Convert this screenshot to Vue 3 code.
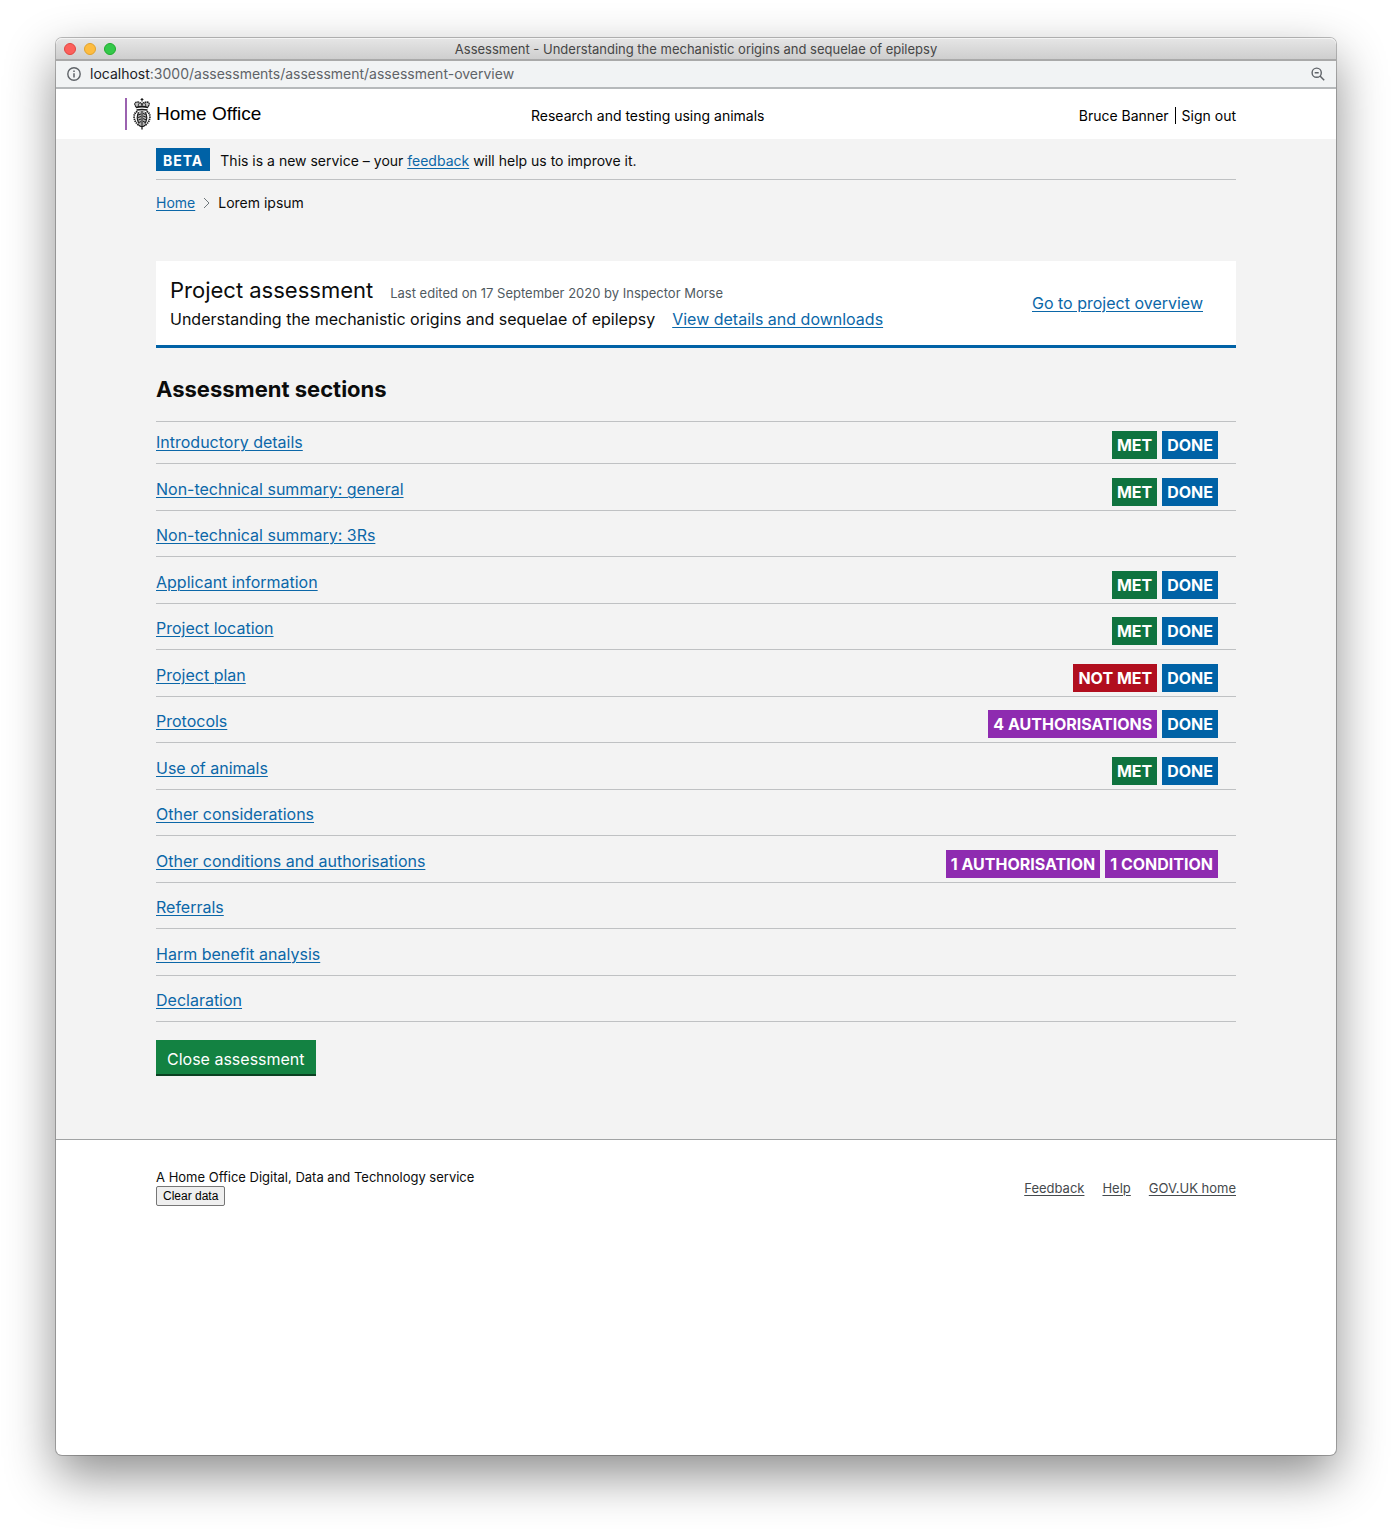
<script setup>
const title = 'Assessment - Understanding the mechanistic origins and sequelae of epilepsy'

const met = { text: 'Met', tone: 'green' }
const done = { text: 'Done', tone: 'blue' }

const sections = [
  { name: 'Introductory details', tags: [met, done] },
  { name: 'Non-technical summary: general', tags: [met, done] },
  { name: 'Non-technical summary: 3Rs', tags: [] },
  { name: 'Applicant information', tags: [met, done] },
  { name: 'Project location', tags: [met, done] },
  { name: 'Project plan', tags: [{ text: 'Not met', tone: 'red' }, done] },
  { name: 'Protocols', tags: [{ text: '4 authorisations', tone: 'purple' }, done] },
  { name: 'Use of animals', tags: [met, done] },
  { name: 'Other considerations', tags: [] },
  {
    name: 'Other conditions and authorisations',
    tags: [{ text: '1 authorisation', tone: 'purple' }, { text: '1 condition', tone: 'purple' }]
  },
  { name: 'Referrals', tags: [] },
  { name: 'Harm benefit analysis', tags: [] },
  { name: 'Declaration', tags: [] }
]

const footerLinks = ['Feedback', 'Help', 'GOV.UK home']
</script>

<template>
  <div class="window">
    <div class="titlebar">
      <div class="lights">
        <span class="light close"></span>
        <span class="light minimise"></span>
        <span class="light expand"></span>
      </div>
      <div class="title">{{ title }}</div>
    </div>

    <div class="address">
      <svg class="info" viewBox="0 0 14 14" width="14" height="14" aria-hidden="true">
        <circle cx="7" cy="7" r="6.2" fill="none" stroke="#5f6368" stroke-width="1.4" />
        <path d="M7 6.2v4.2M7 3.6v1.5" stroke="#5f6368" stroke-width="1.5" />
      </svg>
      <div class="url"><span>localhost</span>:3000/assessments/assessment/assessment-overview</div>
      <svg viewBox="0 0 14 14" width="14" height="14" aria-hidden="true">
        <circle cx="5.7" cy="5.7" r="4.6" fill="none" stroke="#5f6368" stroke-width="1.4" />
        <path d="M3.7 5.7h4M9 9l4.2 4.2" fill="none" stroke="#5f6368" stroke-width="1.5" />
      </svg>
    </div>

    <header class="header">
      <div class="container header-row">
        <a class="brand" href="#">
          <svg class="crest" viewBox="0 0 18 32" width="18" height="32" aria-hidden="true">
            <ellipse cx="9" cy="20" rx="5.4" ry="7.4" fill="#b5b5b5" />
            <path d="M3.400 9 2 5.500 4.500 4 9 6l4.500-2L16 5.500 14.600 9z" fill="#c4c4c4" />
            <g fill="none" stroke="#1a1a1a">
              <path d="M9 0v3.400M7.600 1.500h2.800" stroke-width="1.100" />
              <path d="M3 8.800C.8 6 1.800 4 4.400 4c2 0 3.600.8 4.600 2.200C10 4.800 11.600 4 13.600 4c2.600 0 3.600 2 1.400 4.800" stroke-width="1.300" stroke-dasharray="1.700 .5" />
              <path d="M5.600 8.800C5 7 5.400 6 6.600 5M12.400 8.800c.6-1.800.2-2.800-1-3.800M9 5v4" stroke-width="1" />
              <path d="M2.800 9.400c4-1 8.400-1 12.400 0M3.600 12c3.600-.8 7.200-.8 10.800 0" stroke-width="1.500" />
              <path d="M4.400 13.400C1.600 14.800.8 17.200 1.200 20c.4 3 2 5.200 4.400 7M13.600 13.400c2.800 1.400 3.600 3.800 3.200 6.600-.4 3-2 5.200-4.400 7" stroke-width="1.800" stroke-dasharray="1.400 .7" />
              <path d="M5.600 14.200c-1.800 3.600-1.800 7.800.6 11.200M12.400 14.200c1.800 3.600 1.800 7.800-.6 11.200" stroke-width="1.100" />
              <path d="M9 13v16M5 17l3-1M5 19.500l3-1M5.400 22l2.600-1M6.200 24.400 8 23.600M10 15.400l2.600 1.200M10 18l3 1.200M10 20.600l3 1.200M10 23.200l2 1" stroke-width="1" />
              <path d="M5.600 27c1.200 1 2.200 1.400 3.400 1.600 1.200-.2 2.200-.6 3.400-1.600M9 28v3.500" stroke-width="1.300" />
            </g>
          </svg>
          <span>Home Office</span>
        </a>
        <div class="service">Research and testing using animals</div>
        <div class="account">
          <span>Bruce Banner</span>
          <a href="#">Sign out</a>
        </div>
      </div>
    </header>

    <main class="main">
      <div class="container">
        <div class="phase">
          <strong class="beta">BETA</strong>
          <span>This is a new service – your <a href="#">feedback</a> will help us to improve it.</span>
        </div>

        <nav class="crumbs" aria-label="Breadcrumb">
          <a href="#">Home</a>
          <svg viewBox="0 0 7 12" width="7" height="12" aria-hidden="true">
            <path d="M1 1l5 5-5 5" fill="none" stroke="#6f777b" />
          </svg>
          <span>Lorem ipsum</span>
        </nav>

        <section class="project">
          <div>
            <div class="line">
              <h1>Project assessment</h1>
              <span class="edited">Last edited on 17 September 2020 by Inspector Morse</span>
            </div>
            <div class="line subtitle">
              <span>Understanding the mechanistic origins and sequelae of epilepsy</span>
              <a href="#">View details and downloads</a>
            </div>
          </div>
          <a href="#">Go to project overview</a>
        </section>

        <h2>Assessment sections</h2>
        <ul class="sections">
          <li v-for="section in sections" :key="section.name">
            <a href="#">{{ section.name }}</a>
            <div class="tags">
              <strong v-for="tag in section.tags" :key="tag.text" class="tag" :class="tag.tone">{{ tag.text }}</strong>
            </div>
          </li>
        </ul>

        <button class="submit" type="button">Close assessment</button>
      </div>
    </main>

    <footer class="footer">
      <div class="container footer-row">
        <div>
          <p>A Home Office Digital, Data and Technology service</p>
          <button class="clear" type="button">Clear data</button>
        </div>
        <nav class="footer-links" aria-label="Footer">
          <a v-for="link in footerLinks" :key="link" href="#">{{ link }}</a>
        </nav>
      </div>
    </footer>
  </div>
</template>

<style>
body {
  margin: 0;
  background: #fff;
}
</style>

<style scoped>
* {
  box-sizing: border-box;
}

.window {
  display: flex;
  flex-direction: column;
  min-height: calc(100vh - 112px);
  margin: 38px 56px 74px;
  border-radius: 6px;
  background: #fff;
  box-shadow: 0 0 0 1px rgba(0, 0, 0, 0.25), 0 20px 50px rgba(0, 0, 0, 0.45);
  color: #0b0c0c;
  font-family: Inter, "Liberation Sans", sans-serif;
  font-size: 16px;
  line-height: 24px;
}

.titlebar {
  display: flex;
  align-items: center;
  height: 23px;
  padding: 0 8px;
  border-bottom: 2px solid #a9a9a9;
  border-radius: 6px 6px 0 0;
  background: linear-gradient(#e6e6e6, #cecece);
  box-shadow: inset 0 1px #f4f4f4;
}

.lights {
  display: flex;
  flex: 1;
  gap: 8px;
}

.titlebar::after {
  content: "";
  flex: 1;
}

.light {
  width: 12px;
  height: 12px;
  border: 1px solid #e2463f;
  border-radius: 50%;
  background: #fc605c;
}

.minimise {
  border-color: #e1a32c;
  background: #fdbc40;
}

.expand {
  border-color: #1eac2c;
  background: #34c84a;
}

.title {
  color: #464646;
  font-size: 13px;
}

.address {
  display: flex;
  align-items: center;
  height: 28px;
  padding: 0 11px;
  border-bottom: 2px solid #b6b9bb;
  background: #f1f3f4;
  color: #5f6368;
  font-size: 14px;
}

.url {
  flex: 1;
  margin-left: 9px;
}

.url span {
  color: #202124;
}

.container {
  max-width: 1080px;
  margin: 0 auto;
}

.header-row {
  display: grid;
  grid-template-columns: 375px auto 1fr;
  align-items: center;
  height: 50px;
  color: #000;
  font-size: 14px;
}

.brand {
  display: flex;
  align-items: center;
  justify-self: start;
  gap: 5px;
  height: 32px;
  margin-left: -31px;
  padding-left: 6px;
  border-left: 2px solid #9b62b0;
  color: #000;
  font-family: "Liberation Sans", Arial, sans-serif;
  font-size: 19px;
  text-decoration: none;
}

.service,
.account {
  padding-top: 2px;
  line-height: 17px;
}

.account {
  display: flex;
  justify-content: flex-end;
}

.account a {
  margin-left: 6px;
  padding-left: 6px;
  border-left: 1px solid #000;
  color: #000;
  text-decoration: none;
}

.main {
  padding-bottom: 63px;
  border-bottom: 1px solid #a1a3a4;
  background: #f3f3f3;
}

.main a {
  color: #0b67a8;
  text-decoration-thickness: 1px;
  text-underline-offset: 2px;
}

.phase {
  display: flex;
  align-items: baseline;
  gap: 10px;
  padding: 9px 0 8px;
  border-bottom: 1px solid #bfc1c3;
  font-size: 14px;
  line-height: 21px;
}

.beta {
  padding: 2px 7px 0;
  background: #0062a6;
  color: #fff;
  font-weight: 700;
  letter-spacing: 1px;
}

.crumbs {
  display: flex;
  align-items: center;
  gap: 8px;
  margin-top: 11px;
  font-size: 14px;
}

.project {
  display: flex;
  align-items: center;
  justify-content: space-between;
  margin-top: 46px;
  padding: 13px 33px 14px 14px;
  border-bottom: 3px solid #0062a6;
  background: #fff;
}

.line {
  display: flex;
  align-items: baseline;
  gap: 17px;
}

.subtitle {
  margin-top: 1px;
}

h1 {
  margin: 0;
  font-size: 22px;
  font-weight: 400;
  line-height: 32px;
}

.edited {
  color: #505a5f;
  font-size: 13px;
}

h2 {
  margin: 25px 0 15px;
  font-size: 22px;
  font-weight: 700;
  line-height: 33px;
}

.sections {
  margin: 0;
  padding: 0;
  border-top: 1px solid #bfc1c3;
  list-style: none;
}

.sections li {
  display: flex;
  align-items: flex-end;
  justify-content: space-between;
  min-height: 46px;
  padding: 0 18px 9px 0;
  border-bottom: 1px solid #bfc1c3;
}

.sections li:nth-child(even) {
  min-height: 47px;
}

.sections li:first-child {
  min-height: 42px;
}

.tags {
  display: flex;
  gap: 5px;
  margin-bottom: -5px;
}

.tag {
  padding: 0 5px;
  color: #fff;
  font-weight: 700;
  line-height: 28px;
  text-transform: uppercase;
}

.green {
  background: #0f733f;
}

.blue {
  background: #0062a6;
}

.red {
  background: #b10e1e;
}

.purple {
  background: #8e2bb0;
}

.submit {
  display: block;
  margin-top: 18px;
  padding: 2px 11px 0;
  border: 0;
  background: #138242;
  box-shadow: inset 0 -2px #0a4021;
  color: #fff;
  font: inherit;
  line-height: 34px;
}

.footer {
  padding: 28px 0;
  font-size: 13px;
}

.footer-row {
  display: flex;
  align-items: center;
  justify-content: space-between;
}

.footer p {
  margin: 0;
  line-height: 18px;
}

.clear {
  display: block;
  height: 20px;
  padding: 0 6px;
  border: 1px solid #767676;
  border-radius: 2px;
  background: #efefef;
  color: #000;
  font-family: "Liberation Sans", Arial, sans-serif;
  font-size: 12px;
}

.footer-links {
  display: flex;
  gap: 18px;
  padding-top: 2px;
}

.footer-links a {
  color: #454a4d;
  text-underline-offset: 2px;
}
</style>
